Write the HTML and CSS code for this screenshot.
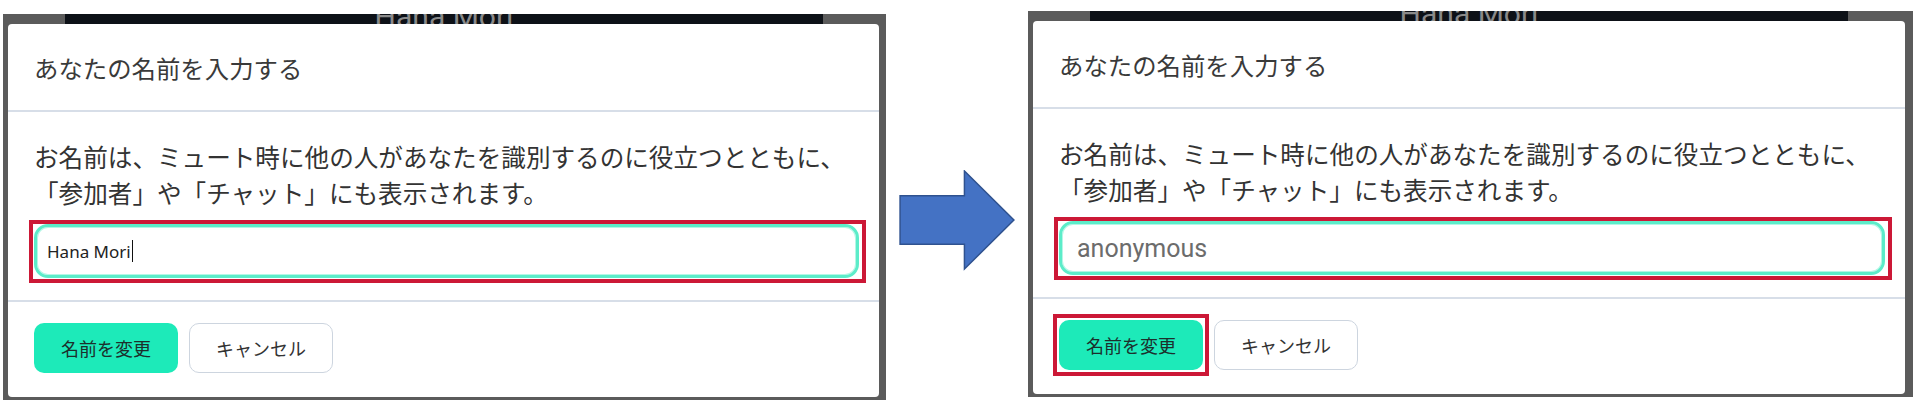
FILE: index.html
```html
<!DOCTYPE html>
<html lang="ja">

<head>
    <meta charset="UTF-8">
    <meta name="viewport" content="width=device-width, initial-scale=1.0">
    <title>名前の変更</title>
    <link rel="stylesheet" href="styles.css">
</head>

<body>

    <div class="row">
        <!-- Before -->
        <div class="shot">
            <div class="backdrop">
                <div class="tile"><span>Hana Mori</span></div>
            </div>
            <div class="dialog">
                <div class="dialog-header">あなたの名前を入力する</div>
                <div class="dialog-body">
                    <p>お名前は、ミュート時に他の人があなたを識別するのに役立つとともに、<br>「参加者」や「チャット」にも表示されます。</p>
                    <div class="mark-box">
                        <div class="name-input">Hana Mori<span class="caret"></span></div>
                    </div>
                </div>
                <div class="dialog-footer">
                    <button class="btn btn-primary">名前を変更</button>
                    <button class="btn btn-cancel">キャンセル</button>
                </div>
            </div>
        </div>

        <svg class="arrow" viewBox="0 0 118 102" width="118" height="102">
            <polygon points="1,26 66,26 66,1 116,50.5 66,100 66,75 1,75" fill="#4472c4" stroke="#2f528f" stroke-width="1.5" />
        </svg>

        <!-- After -->
        <div class="shot shot-after">
            <div class="backdrop">
                <div class="tile"><span>Hana Mori</span></div>
            </div>
            <div class="dialog">
                <div class="dialog-header">あなたの名前を入力する</div>
                <div class="dialog-body">
                    <p>お名前は、ミュート時に他の人があなたを識別するのに役立つとともに、<br>「参加者」や「チャット」にも表示されます。</p>
                    <div class="mark-box">
                        <div class="name-input placeholder">anonymous</div>
                    </div>
                </div>
                <div class="dialog-footer">
                    <span class="mark-btn"><button class="btn btn-primary">名前を変更</button></span>
                    <button class="btn btn-cancel">キャンセル</button>
                </div>
            </div>
        </div>
    </div>

</body>

</html>
```

FILE: styles.css
```css
/* Page */
body {
    margin: 0;
    background: #fff;
    font-family: "Noto Sans CJK JP", "Noto Sans", sans-serif;
    color: #333;
    width: 1913px;
    height: 404px;
    overflow: hidden;
}

.row {
    display: flex;
    align-items: flex-start;
    padding-left: 3px;
}

/* Screenshot frame */
.shot {
    width: 883px;
    height: 386px;
    margin-top: 14px;
    box-sizing: border-box;
    background: #5b5b5b;
    padding: 0 7px 3px 5px;
    display: flex;
    flex-direction: column;
}

.shot-after {
    width: 885px;
    margin-top: 11px;
    padding-right: 8px;
}

/* Dark video strip behind the dialog */
.backdrop {
    height: 10px;
    display: flex;
}

.tile {
    width: 758px;
    margin-left: 57px;
    background: #0d1117;
    overflow: hidden;
    text-align: center;
    font-family: Roboto, sans-serif;
    font-size: 30px;
    line-height: 10px;
    color: #8a8a8a;
}

.tile span {
    display: inline-block;
    transform: translateY(-2px);
}

/* Dialog */
.dialog {
    background: #fff;
    border-radius: 4px;
    flex: none;
    height: 373px;
    display: flex;
    flex-direction: column;
}

.dialog-header {
    height: 86px;
    display: flex;
    align-items: center;
    padding-left: 26px;
    font-size: 24.4px;
    color: #3a3a3a;
    border-bottom: 2px solid #d7dee8;
}

.dialog-body {
    padding: 26px 20px 17px 26px;
    border-bottom: 2px solid #d7dee8;
}

.dialog-body p {
    margin: 0 0 10px;
    font-size: 24.6px;
    line-height: 36px;
    color: #333;
    white-space: nowrap;
}

/* Red annotation boxes */
.mark-box {
    border: 4px solid #cc1836;
    padding: 0 3px 1px 1px;
    margin: 0 -7px 0 -5px;
}

.name-input {
    height: 54px;
    box-sizing: border-box;
    border: 3px solid #5cecc9;
    box-shadow: inset 0 0 0 1px #b4f7e6;
    border-radius: 14px;
    display: flex;
    align-items: center;
    padding-left: 10px;
    font-family: "Noto Sans", sans-serif;
    font-size: 17px;
    color: #222;
}

.caret {
    display: inline-block;
    width: 1px;
    height: 22px;
    background: #111;
    margin-left: 1px;
}

.placeholder {
    padding-left: 15px;
    font-family: Roboto, sans-serif;
    font-size: 25px;
    color: #6c6c6c;
}

.dialog-footer {
    padding: 21px 26px 24px;
    display: flex;
    gap: 11px;
}

.mark-btn {
    display: inline-flex;
    border: 4px solid #cc1836;
    padding: 2px;
    margin: -6px;
}

/* Buttons */
.btn {
    width: 144px;
    height: 50px;
    border-radius: 10px;
    font-family: "Noto Sans CJK JP", sans-serif;
    font-size: 18px;
    padding: 0;
    cursor: pointer;
}

.btn-primary {
    background: #1deab9;
    border: none;
    color: #1c2f2c;
}

.btn-cancel {
    background: #fff;
    border: 1px solid #cdd5df;
    color: #333;
}

/* Arrow */
.arrow {
    flex: none;
    width: 117px;
    height: 101px;
    margin: 170px 12px 0 13px;
}
```
